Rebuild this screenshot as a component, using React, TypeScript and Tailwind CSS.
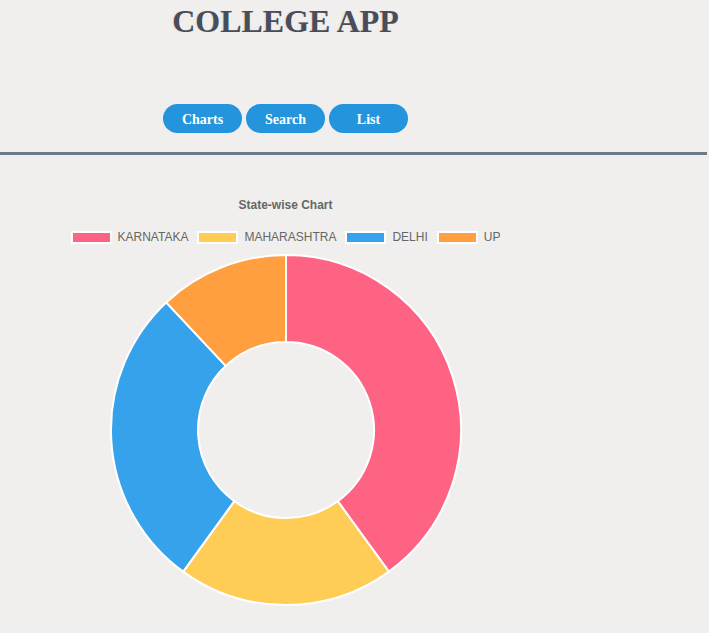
import React from 'react';

const states = [
    { name: 'KARNATAKA', value: 10, color: '#ff6384' },
    { name: 'MAHARASHTRA', value: 5, color: '#ffcd56' },
    { name: 'DELHI', value: 7, color: '#36a2eb' },
    { name: 'UP', value: 3, color: '#ff9f40' },
];

const arcPath = (cx: number, cy: number, R: number, r: number, a0: number, a1: number) => {
    const pt = (rad: number, a: number) => [cx + rad * Math.sin(a), cy - rad * Math.cos(a)];
    const large = a1 - a0 > Math.PI ? 1 : 0;
    const [x0, y0] = pt(R, a0);
    const [x1, y1] = pt(R, a1);
    const [x2, y2] = pt(r, a1);
    const [x3, y3] = pt(r, a0);
    return `M${x0} ${y0} A${R} ${R} 0 ${large} 1 ${x1} ${y1} L${x2} ${y2} A${r} ${r} 0 ${large} 0 ${x3} ${y3} Z`;
};

const Doughnut: React.FC = () => {
    const total = states.reduce((s, d) => s + d.value, 0);
    let start = 0;
    return (
        <svg width={352} height={352} viewBox="0 0 352 352">
            {states.map((d) => {
                const a0 = start;
                const a1 = start + (d.value / total) * Math.PI * 2;
                start = a1;
                return (
                    <path
                        key={d.name}
                        d={arcPath(176, 176, 175, 88, a0, a1)}
                        fill={d.color}
                        stroke="#ffffff"
                        strokeWidth={2}
                        strokeLinejoin="round"
                    />
                );
            })}
        </svg>
    );
};

const App: React.FC = () => {
    return (
        <div className="min-h-[633px] bg-[#f0efed]">
            <header className="h-[152px] w-[571px] flex flex-col items-center">
                <h1 className="pt-px h-[41px] leading-[40px] text-[32px] font-bold text-[#474d5a] [font-family:'Liberation_Serif',serif] [text-shadow:-1px_0_1px_rgba(200,150,100,0.25)]">
                    COLLEGE APP
                </h1>
                <nav className="mt-[63px] flex gap-[4px]">
                    {['Charts', 'Search', 'List'].map((label) => (
                        <button
                            key={label}
                            className="w-[79px] h-[29px] pt-px rounded-full bg-[#2494dd] text-white text-[14px] font-bold [font-family:'Liberation_Serif',serif]"
                        >
                            {label}
                        </button>
                    ))}
                </nav>
            </header>
            <div className="h-[3px] w-[707px] bg-[#6c7b8c]" />
            <main className="w-[571px] flex flex-col items-center pt-[43px] [font-family:'Liberation_Sans',Arial,sans-serif]">
                <h2 className="h-[14px] leading-[14px] text-[12px] font-bold text-[#666666]">State-wise Chart</h2>
                <div className="mt-[18px] flex items-center gap-[9px] h-[14px]">
                    {states.map((d) => (
                        <div key={d.name} className="flex items-center gap-[6px]">
                            <span
                                className="block w-[41px] h-[13px] border-2 border-white"
                                style={{ backgroundColor: d.color }}
                            />
                            <span className="text-[12px] leading-[14px] text-[#666666]">{d.name}</span>
                        </div>
                    ))}
                </div>
                <div className="mt-[10px]">
                    <Doughnut />
                </div>
            </main>
        </div>
    );
};

export default App;
